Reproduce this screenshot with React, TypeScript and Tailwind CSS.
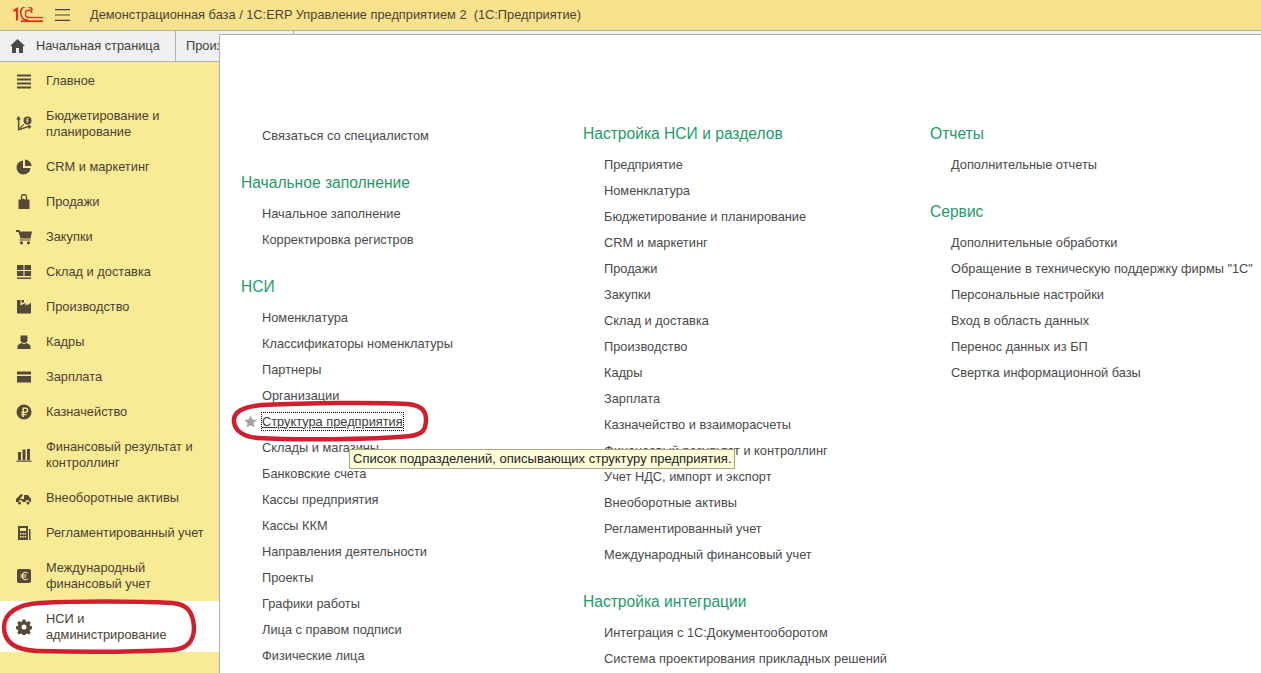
const sans = "font-['Liberation_Sans',Arial,sans-serif]";

function Icon({ children }: { children: React.ReactNode }) {
  return (
    <svg width="16" height="16" viewBox="0 0 16 16" fill="#55493a">
      {children}
    </svg>
  );
}

const icons: Record<string, React.ReactNode> = {
  menu: <path d="M1 1.500h14v2H1zM1 5.500h14v2H1zM1 9.500h14v2H1zM1 13.500h14v2H1z" />,
  budget: (
    <>
      <path d="M2.500 0 5 3.500H3.400v9.300l9-3V8l3.100 2.700-3 2.500v-2l-9.800 3.300-.8-.6V3.500H0z" />
      <path d="M3.400 12l4-4 .7.700-4 4z" />
      <circle cx="11.500" cy="4.500" r="4" />
      <path d="M10.500 2.300h2.300v1h-1.300v1h1.200v1h-1.200V7h-1z" fill="#f9ea95" />
    </>
  ),
  crm: (
    <>
      <path d="M7 1.500a7 7 0 1 0 7.500 7.500H7z" />
      <path d="M9 .5A7 7 0 0 1 15.500 7H9z" />
    </>
  ),
  sales: (
    <>
      <path d="M2.500 5.500h3l2-1 1.500 1h4.500V15h-11z" />
      <path d="M5.500 6.500V3a2.500 2.500 0 0 1 5 0v3.500" fill="none" stroke="#55493a" strokeWidth="1.300" />
    </>
  ),
  cart: (
    <>
      <path d="M0 1h3.500l.5 1.500h12l-1.500 7H4.500L2.500 3H0z" />
      <path d="M3.500 10.500h11v1h-11z" />
      <circle cx="5.500" cy="13.800" r="1.600" />
      <circle cx="12.500" cy="13.800" r="1.600" />
    </>
  ),
  stock: <path d="M1 1h6.500v5H1zM8.500 1H15v5H8.500zM1 7h6.500v5H1zM8.500 7H15v5H8.500zM1 13.500h14V15H1z" />,
  factory: <path d="M1 1h3.500v5.500L9.500 4v3l2-2.500v2l3.500-3v11H1zM5.500 1h2.500v2.500H5.500z" />,
  staff: (
    <>
      <path d="M4.500 1.500h7v4a3.500 3.500 0 0 1-7 0z" />
      <path d="M1.500 15v-2.500C1.500 10.500 4 9.500 6 9l2 1.500L10 9c2 .5 4.500 1.500 4.500 3.500V15z" />
    </>
  ),
  salary: <path d="M1 2.500h14v3H1zM1 7h14v6.500H1z" />,
  treasury: (
    <>
      <circle cx="8" cy="8" r="7.500" />
      <path d="M6.500 3.500h3a2.500 2.500 0 0 1 0 5.500H8v1h2.500v1.200H8V13H6.500v-1.800H5.200V10h1.300V9H5.200V7.700h1.300zM8 4.800v2.900h1.400a1.400 1.400 0 0 0 0-2.900z" fill="#f9ea95" />
    </>
  ),
  finance: <path d="M2 5h3v8H2zM6.500 2.500h3V13h-3zM11 2h3v11h-3zM.5 13.500h15v1.200H.5z" />,
  assets: (
    <>
      <path d="M0 12V9l5-5 2 1-3 4h4V5h4l3 4v3h-1.500a2 2 0 0 0-4 0h-3a2 2 0 0 0-4 0z" />
      <circle cx="3.500" cy="13" r="1.500" />
      <circle cx="12" cy="13" r="1.500" />
    </>
  ),
  regulated: (
    <>
      <path d="M2 1h10v14H2z" />
      <path d="M4 3h6v3H4zM4 8h1.500v1.500H4zM6.300 8h1.500v1.500H6.300zM8.600 8h1.500v1.500H8.600zM4 11h1.500v1.500H4zM6.300 11h1.500v1.500H6.300zM8.600 11h1.500v1.500H8.600z" fill="#f9ea95" />
      <path d="M13 4h1.500v11H13z" />
    </>
  ),
  intl: (
    <>
      <rect x="1" y="1" width="14" height="14" rx="2" />
      <path d="M11.500 4.500a3.500 3.500 0 0 0-5.600 2H4.500v1h1.300v1H4.500v1h1.400a3.500 3.500 0 0 0 5.600 2v-1.400a2.300 2.300 0 0 1-4.300-.6h3v-1H7.100v-1h3.400v-1H7.200a2.300 2.300 0 0 1 4.300-.6z" fill="#f9ea95" />
    </>
  ),
  gear: (
    <path
      fillRule="evenodd"
      d="M6.600 1h2.800l.4 2 1.300.6 1.800-1.100 1.900 1.900-1.100 1.800.6 1.300 2 .4v2.800l-2 .4-.6 1.300 1.100 1.800-1.900 1.900-1.800-1.100-1.300.6-.4 2H6.600l-.4-2-1.300-.6-1.800 1.100-1.900-1.900 1.100-1.800-.6-1.300-2-.4V7.900l2-.4.6-1.300-1.100-1.800 1.900-1.900 1.800 1.100 1.300-.6zM8 6a2.500 2.500 0 1 0 0 5 2.500 2.500 0 0 0 0-5z"
      transform="translate(0 -.5)"
    />
  ),
};

const navItems = [
  { icon: "menu", label: "Главное" },
  { icon: "budget", label: "Бюджетирование и планирование" },
  { icon: "crm", label: "CRM и маркетинг" },
  { icon: "sales", label: "Продажи" },
  { icon: "cart", label: "Закупки" },
  { icon: "stock", label: "Склад и доставка" },
  { icon: "factory", label: "Производство" },
  { icon: "staff", label: "Кадры" },
  { icon: "salary", label: "Зарплата" },
  { icon: "treasury", label: "Казначейство" },
  { icon: "finance", label: "Финансовый результат и контроллинг" },
  { icon: "assets", label: "Внеоборотные активы" },
  { icon: "regulated", label: "Регламентированный учет" },
  { icon: "intl", label: "Международный финансовый учет" },
  { icon: "gear", label: "НСИ и администрирование", active: true },
];

const columns = [
  {
    width: "w-[342px]",
    lead: ["Связаться со специалистом"],
    groups: [
      { title: "Начальное заполнение", items: ["Начальное заполнение", "Корректировка регистров"] },
      {
        title: "НСИ",
        items: [
          "Номенклатура",
          "Классификаторы номенклатуры",
          "Партнеры",
          "Организации",
          "Структура предприятия",
          "Склады и магазины",
          "Банковские счета",
          "Кассы предприятия",
          "Кассы ККМ",
          "Направления деятельности",
          "Проекты",
          "Графики работы",
          "Лица с правом подписи",
          "Физические лица",
        ],
      },
    ],
  },
  {
    width: "w-[347px]",
    groups: [
      {
        title: "Настройка НСИ и разделов",
        items: [
          "Предприятие",
          "Номенклатура",
          "Бюджетирование и планирование",
          "CRM и маркетинг",
          "Продажи",
          "Закупки",
          "Склад и доставка",
          "Производство",
          "Кадры",
          "Зарплата",
          "Казначейство и взаиморасчеты",
          "Финансовый результат и контроллинг",
          "Учет НДС, импорт и экспорт",
          "Внеоборотные активы",
          "Регламентированный учет",
          "Международный финансовый учет",
        ],
      },
      {
        title: "Настройка интеграции",
        items: ["Интеграция с 1С:Документооборотом", "Система проектирования прикладных решений"],
      },
    ],
  },
  {
    width: "w-[331px]",
    groups: [
      { title: "Отчеты", items: ["Дополнительные отчеты"] },
      {
        title: "Сервис",
        items: [
          "Дополнительные обработки",
          'Обращение в техническую поддержку фирмы "1С"',
          "Персональные настройки",
          "Вход в область данных",
          "Перенос данных из БП",
          "Свертка информационной базы",
        ],
      },
    ],
  },
];

function Item({ label }: { label: string }) {
  if (label === "Структура предприятия") {
    return (
      <div className="relative flex h-[26px] items-center pb-[2px] pl-[21px] text-[#3d3d3d]">
        <svg className="absolute left-[3px] top-[6px]" width="13" height="13" viewBox="0 0 24 24" fill="#a3a3a3">
          <path d="M12 1l3.400 7.400 8 .9-5.900 5.400 1.600 8L12 18.700l-7.100 4 1.600-8L.6 9.300l8-.9z" />
        </svg>
        <span className="-ml-px border border-dotted border-black underline leading-[17px]">{label}</span>
      </div>
    );
  }
  return <div className="flex h-[26px] items-center whitespace-nowrap pl-[21px] text-[#4a4a4a]">{label}</div>;
}

export default function App() {
  return (
    <div className={`${sans} relative h-[673px] w-[1261px] overflow-hidden bg-[#f9ea95] text-[12.8px]`}>
      <header className="flex h-[30px] items-center bg-[#f9e28e] text-[#4b4232]">
        <svg className="ml-[13px]" width="30" height="16" viewBox="0 0 30 16" fill="none" stroke="#d8321f">
          <path d="M0.500 4 4 2V13.500" strokeWidth="2.200" />
          <path d="M19.500 3.500A6 6 0 0 0 8 7a6 6 0 0 0 7 6" strokeWidth="1.600" />
          <path d="M19 6a3 3 0 0 0-6.500 1 3 3 0 0 0 3 3.500" strokeWidth="1.400" />
          <path d="M15 10.500h15" strokeWidth="1.300" />
          <path d="M8 14.200h22" strokeWidth="1.800" />
        </svg>
        <svg className="ml-[12px]" width="15" height="12" viewBox="0 0 15 12" fill="#4b4232">
          <path d="M0 0h15v1.200H0zM0 5.400h15v1.200H0zM0 10.800h15V12H0z" />
        </svg>
        <span className="ml-[20px]">Демонстрационная база / 1С:ERP Управление предприятием 2&nbsp; (1С:Предприятие)</span>
      </header>

      <div className="flex h-[32px] border-y border-[#b0b0b0] bg-[#f0f0f0] text-[#3f3f3f]">
        <div className="flex w-[176px] items-center border-r border-[#b0b0b0] pl-[10px]">
          <svg width="15" height="14" viewBox="0 0 15 14" fill="#4b4b4b">
            <path d="M7.500 0 15 7h-2v7H9V9H6v5H2V7H0z" />
          </svg>
          <span className="ml-[11px]">Начальная страница</span>
        </div>
        <div className="flex w-[118px] items-center border-r border-[#b0b0b0] pl-[10px]">Производство</div>
      </div>

      <div className="flex">
        <nav className="w-[219px] pt-px text-[#4b4232]">
          {navItems.map((item) => (
            <div
              key={item.label}
              className={`flex items-center py-[9.5px] pl-[16px] ${item.active ? "bg-white" : ""}`}
            >
              <div className="flex w-[30px] shrink-0">
                <Icon>{icons[item.icon]}</Icon>
              </div>
              <div className="w-[160px] leading-[16px]">{item.label}</div>
            </div>
          ))}
        </nav>

        <main className="relative z-10 -mt-[28px] flex h-[700px] flex-1 border-l border-t border-[#b0b0b0] bg-white pl-[21px] pt-[81px]">
          {columns.map((col) => (
            <div key={col.groups[0].title} className={`${col.width} shrink-0`}>
              {col.lead && (
                <div className="mb-4 pt-[7px]">
                  {col.lead.map((label) => (
                    <Item key={label} label={label} />
                  ))}
                </div>
              )}
              {col.groups.map((group) => (
                <div key={group.title} className="mb-4">
                  <div className="flex h-9 items-center text-[15.6px] text-[#1f9a68]">{group.title}</div>
                  {group.items.map((label) => (
                    <Item key={label} label={label} />
                  ))}
                </div>
              ))}
            </div>
          ))}
        </main>
      </div>

      <div className="absolute left-[349px] top-[449px] z-20 flex h-[20px] w-[386px] items-center border border-[#a8a67c] bg-[#fffdd9] pl-[3px] text-[13px] text-[#222]">
        Список подразделений, описывающих структуру предприятия.
      </div>

      <svg className="absolute left-0 top-0 z-30" width="1261" height="673" fill="none" stroke="#d0202f" strokeWidth="4.500">
        <path d="M262 405c45-2 110-3 145-1 14 1 19 7 19 15 0 11-3 15-16 17-40 4-120 4-152 2-14-1-23-7-24-16-1-10 8-15 28-17z" />
        <path d="M40 603c35-2 95-2 132 0 16 1 21 10 22 24 0 14-6 22-22 23-40 2-95 2-135 1-22-1-33-9-33-24 0-14 14-23 36-24z" />
      </svg>
    </div>
  );
}
